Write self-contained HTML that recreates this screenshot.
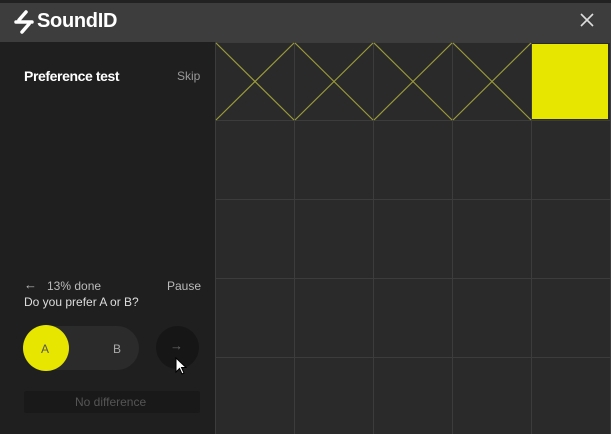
<!DOCTYPE html>
<html><head><style>
body{margin:0;width:611px;height:434px;overflow:hidden;background:#1f1f1f;font-family:"Liberation Sans",sans-serif;position:relative}
.top{position:absolute;left:0;top:0;width:611px;height:3px;background:#222}
.bar{position:absolute;left:0;top:3px;width:611px;height:39px;background:#3d3d3d}
.t{position:absolute;white-space:nowrap}
</style></head><body>
<div class="top"></div>
<div class="bar"></div>
<svg style="position:absolute;left:14px;top:10px" width="20" height="24" viewBox="0 0 20 24">
<path d="M12 2 L5 10 M2 12 H18 M15 14 L8 22" stroke="#fff" stroke-width="3.5" stroke-linecap="round"/>
</svg>
<div class="t" style="left:37px;top:10px;color:#fff;font-size:20px;font-weight:bold;letter-spacing:-0.3px">SoundID</div>
<svg style="position:absolute;left:580px;top:13px" width="14" height="14"><path d="M1 1L13 13M13 1L1 13" stroke="#ddd" stroke-width="1.6"/></svg>
<div class="t" style="left:24px;top:68px;color:#fff;font-size:14px;font-weight:bold;letter-spacing:-0.4px">Preference test</div>
<div class="t" style="left:177px;top:69px;color:#999;font-size:12px">Skip</div>
<div class="t" style="left:24px;top:277px;color:#bbb;font-size:13px">←</div>
<div class="t" style="left:47px;top:279px;color:#bbb;font-size:12px">13% done</div>
<div class="t" style="left:167px;top:279px;color:#bbb;font-size:12px">Pause</div>
<div class="t" style="left:24px;top:295px;color:#ddd;font-size:12px">Do you prefer A or B?</div>
<div style="position:absolute;left:24px;top:326px;width:115px;height:44px;border-radius:22px;background:#2b2b2b"></div>
<div style="position:absolute;left:23px;top:325px;width:46px;height:46px;border-radius:50%;background:#e6e600"></div>
<div class="t" style="left:41px;top:342px;color:#555;font-size:12px">A</div>
<div class="t" style="left:113px;top:342px;color:#aaa;font-size:12px">B</div>
<div style="position:absolute;left:156px;top:326px;width:43px;height:43px;border-radius:50%;background:#161616"></div>
<div class="t" style="left:170px;top:338px;color:#666;font-size:13px">→</div>
<svg style="position:absolute;left:175px;top:357px" width="12" height="18"><path d="M1 1V15L4.5 11.5L7 17L9 16L6.5 10.5H11Z" fill="#fff" stroke="#000" stroke-width="1"/></svg>
<div style="position:absolute;left:24px;top:391px;width:176px;height:22px;background:#191919;border-radius:2px"></div>
<div class="t" style="left:75px;top:395px;color:#555;font-size:12px">No difference</div>
<svg style="position:absolute;left:215px;top:42px" width="396" height="392">
<rect width="396" height="392" fill="#2a2a2a"/>
<g stroke="#3c3c3c" stroke-width="1">
<path d="M0.5 0V392M79.5 0V392M158.5 0V392M237.5 0V392M316.5 0V392M395.5 0V392"/>
<path d="M0 0.5H396M0 78.5H396M0 157.5H396M0 236.5H396M0 315.5H396"/>
</g>
<g stroke="#9a9a3a" stroke-width="1.2">
<path d="M1 1L79 78M79 1L1 78M80 1L158 78M158 1L80 78M159 1L237 78M237 1L159 78M238 1L316 78M316 1L238 78"/>
</g>
<rect x="317" y="2" width="76" height="75" fill="#e6e600"/>
</svg>
</body></html>
